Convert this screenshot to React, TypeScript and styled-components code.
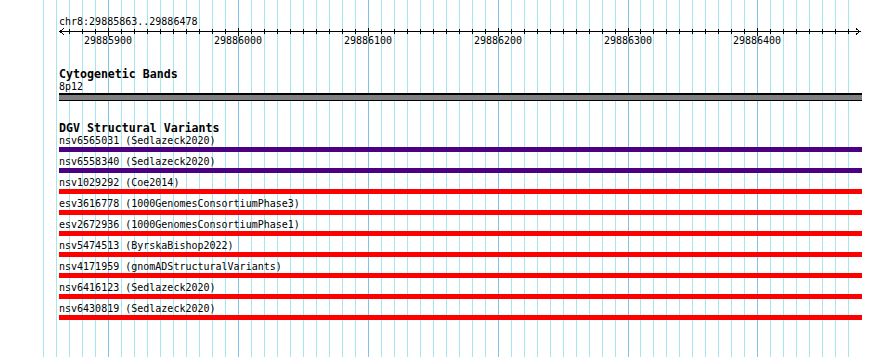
import React from "react";
import styled, { createGlobalStyle } from "styled-components";

// layout constants of the browser image
const TRACK_LEFT = 59;
const TRACK_WIDTH = 803;
const MAJOR_X = 108.3; // position of 29885900
const STEP = 12.98; // 10 bp

const GlobalStyle = createGlobalStyle`
  html, body {
    margin: 0;
    padding: 0;
    background: #ffffff;
  }
  body {
    font-family: "DejaVu Sans Mono", "Liberation Mono", monospace;
    color: #000000;
  }
`;

const Canvas = styled.div`
  position: relative;
  width: 890px;
  height: 357px;
  overflow: hidden;
  background: #ffffff;
`;

const GridLayer = styled.svg`
  position: absolute;
  left: 0;
  top: 0;
  z-index: 0;
`;

const Content = styled.div`
  position: relative;
  z-index: 1;
  display: flex;
  flex-direction: column;
  padding: 16px 28px 0 ${TRACK_LEFT}px;
`;

const Small = styled.div<{ $lh?: number }>`
  font-size: 10px;
  line-height: ${(p) => p.$lh ?? 13}px;
  height: ${(p) => p.$lh ?? 13}px;
  white-space: pre;
`;

const TrackTitle = styled.div`
  margin-top: 21px;
  font-size: 11.6px;
  font-weight: bold;
  line-height: 12px;
  height: 12px;
  white-space: pre;
`;

const BandBar = styled.div`
  box-sizing: border-box;
  flex: 0 0 8px;
  height: 8px;
  margin-bottom: 0;
  background: #7f7f7f;
  border-top: 2px solid #000;
  border-bottom: 1px solid #000;
`;

const VariantRow = styled.div`
  display: flex;
  flex-direction: column;
  margin-bottom: 3px;
`;

const VariantBar = styled.div<{ $color: string }>`
  height: 5px;
  background: ${(p) => p.$color};
`;

const RulerSvg = styled.svg`
  display: block;
  overflow: visible;
`;

const ticks = Array.from({ length: 63 }, (_, i) => i - 5).map((k) => ({
  k,
  x: Math.round(MAJOR_X + STEP * k),
  major: k % 10 === 0,
}));

const Grid = () => (
  <GridLayer width={890} height={357} shapeRendering="crispEdges">
    {ticks.map((t) => (
      <line
        key={t.k}
        x1={t.x + 0.5}
        x2={t.x + 0.5}
        y1={0}
        y2={357}
        stroke={t.major ? "#80c4ec" : "#a6e6ef"}
        strokeWidth={1}
      />
    ))}
  </GridLayer>
);

const Ruler = () => {
  const y = 4.5;
  return (
    <RulerSvg width={TRACK_WIDTH} height={20} shapeRendering="crispEdges">
      <line x1={1} x2={802} y1={y} y2={y} stroke="#000" />
      <polyline points={`5,${y - 3} 1,${y} 5,${y + 3}`} fill="none" stroke="#000" />
      <polyline points={`797,${y - 3} 801,${y} 797,${y + 3}`} fill="none" stroke="#000" />
      {ticks
        .filter((t) => t.x > 62 && t.x < 856)
        .map((t) => (
          <line
            key={t.k}
            x1={t.x - TRACK_LEFT + 0.5}
            x2={t.x - TRACK_LEFT + 0.5}
            y1={t.major ? 1 : 2}
            y2={t.major ? 9 : 7}
            stroke="#000"
          />
        ))}
      {ticks
        .filter((t) => t.major && t.k >= 0)
        .map((t) => (
          <text
            key={t.k}
            x={t.x - TRACK_LEFT}
            y={16.5}
            textAnchor="middle"
            fontFamily='"DejaVu Sans Mono", "Liberation Mono", monospace'
            fontSize={10}
            fill="#000"
          >
            {29885900 + t.k * 10}
          </text>
        ))}
    </RulerSvg>
  );
};

const INDIGO = "#4b0082";
const RED = "#ff0000";

const variants = [
  { id: "nsv6565031", study: "Sedlazeck2020", color: INDIGO },
  { id: "nsv6558340", study: "Sedlazeck2020", color: INDIGO },
  { id: "nsv1029292", study: "Coe2014", color: RED },
  { id: "esv3616778", study: "1000GenomesConsortiumPhase3", color: RED },
  { id: "esv2672936", study: "1000GenomesConsortiumPhase1", color: RED },
  { id: "nsv5474513", study: "ByrskaBishop2022", color: RED },
  { id: "nsv4171959", study: "gnomADStructuralVariants", color: RED },
  { id: "nsv6416123", study: "Sedlazeck2020", color: RED },
  { id: "nsv6430819", study: "Sedlazeck2020", color: RED },
];

const App = () => (
  <>
    <GlobalStyle />
    <Canvas>
      <Grid />
      <Content>
        <Small $lh={11}>chr8:29885863..29886478</Small>
        <Ruler />
        <TrackTitle>Cytogenetic Bands</TrackTitle>
        <Small>8p12</Small>
        <BandBar />
        <TrackTitle>DGV Structural Variants</TrackTitle>
        {variants.map((v) => (
          <VariantRow key={v.id}>
            <Small>{`${v.id} (${v.study})`}</Small>
            <VariantBar $color={v.color} />
          </VariantRow>
        ))}
      </Content>
    </Canvas>
  </>
);

export default App;
